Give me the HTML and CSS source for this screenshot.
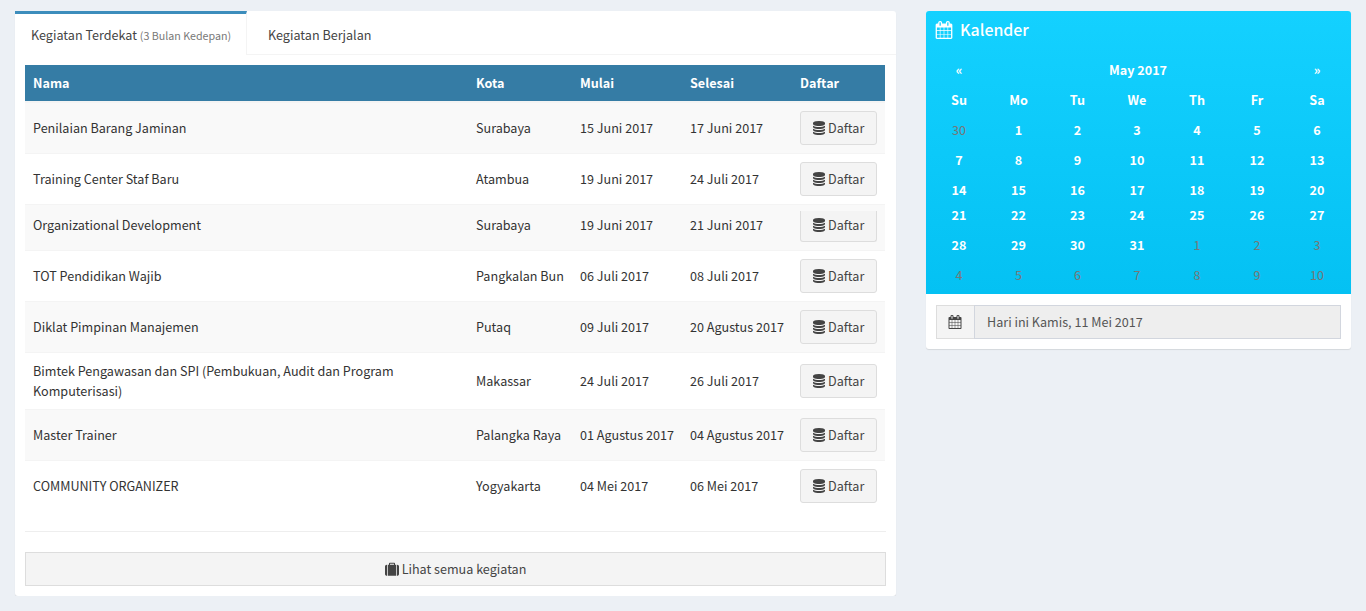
FILE: index.html
```html
<!DOCTYPE html>
<html lang="id">
<head>
<meta charset="utf-8">
<title>Kegiatan</title>
<link rel="stylesheet" href="styles.css">
</head>
<body>
<svg class="sprite" aria-hidden="true">
  <symbol id="calendar" viewBox="0 0 1792 1792"><path d="M192 1664h288v-288h-288v288zM544 1664h320v-288h-320v288zM192 1312h288v-320h-288v320zM544 1312h320v-320h-320v320zM192 928h288v-288h-288v288zM928 1664h320v-288h-320v288zM544 928h320v-288h-320v288zM1312 1664h288v-288h-288v288zM928 1312h320v-320h-320v320zM576 448v-288q0-13-9.5-22.5t-22.5-9.5h-64q-13 0-22.5 9.5t-9.5 22.5v288q0 13 9.5 22.5t22.5 9.5h64q13 0 22.5-9.5t9.5-22.5zM1312 1312h288v-320h-288v320zM928 928h320v-288h-320v288zM1312 928h288v-288h-288v288zM1344 448v-288q0-13-9.5-22.5t-22.5-9.5h-64q-13 0-22.5 9.5t-9.5 22.5v288q0 13 9.5 22.5t22.5 9.5h64q13 0 22.5-9.5t9.5-22.5zM1728 384v1280q0 52-38 90t-90 38h-1408q-52 0-90-38t-38-90v-1280q0-52 38-90t90-38h128v-96q0-66 47-113t113-47h64q66 0 113 47t47 113v96h384v-96q0-66 47-113t113-47h64q66 0 113 47t47 113v96h128q52 0 90 38t38 90z"/></symbol>
  <symbol id="database" viewBox="0 0 1792 1792"><path d="M896 768q237 0 443-43t325-127v170q0 69-103 128t-280 93.5-385 34.5-385-34.5-280-93.5-103-128v-170q119 84 325 127t443 43zM896 1536q237 0 443-43t325-127v170q0 69-103 128t-280 93.5-385 34.5-385-34.5-280-93.5-103-128v-170q119 84 325 127t443 43zM896 1152q237 0 443-43t325-127v170q0 69-103 128t-280 93.5-385 34.5-385-34.5-280-93.5-103-128v-170q119 84 325 127t443 43zM896 0q208 0 385 34.5t280 93.5 103 128v128q0 69-103 128t-280 93.5-385 34.5-385-34.5-280-93.5-103-128v-128q0-69 103-128t280-93.5 385-34.5z"/></symbol>
  <symbol id="suitcase" viewBox="0 -100 1792 1792"><path d="M640 256h512v-128h-512v128zM288 256v1408h-64q-92 0-158-66t-66-158v-960q0-92 66-158t158-66h64zM1408 256v1408h-1024v-1408h128v-160q0-40 28-68t68-28h576q40 0 68 28t28 68v160h128zM1792 480v960q0 92-66 158t-158 66h-64v-1408h64q92 0 158 66t66 158z"/></symbol>
</svg>
<main class="page">
  <section class="card events">
    <nav class="tabs">
      <a class="tab active">Kegiatan Terdekat <small>(3 Bulan Kedepan)</small></a>
      <a class="tab">Kegiatan Berjalan</a>
    </nav>
    <div class="events-body">
      <table class="table">
        <colgroup><col class="c-name"><col class="c-city"><col class="c-date"><col class="c-date"><col class="c-act"></colgroup>
        <thead><tr><th>Nama</th><th>Kota</th><th>Mulai</th><th>Selesai</th><th>Daftar</th></tr></thead>
        <tbody>
          <tr class="first"><td>Penilaian Barang Jaminan</td><td>Surabaya</td><td>15 Juni 2017</td><td>17 Juni 2017</td><td><a class="btn"><svg class="icon"><use href="#database"/></svg><span>Daftar</span></a></td></tr>
          <tr><td>Training Center Staf Baru</td><td>Atambua</td><td>19 Juni 2017</td><td>24 Juli 2017</td><td><a class="btn"><svg class="icon"><use href="#database"/></svg><span>Daftar</span></a></td></tr>
          <tr class="short"><td>Organizational Development</td><td>Surabaya</td><td>19 Juni 2017</td><td>21 Juni 2017</td><td><a class="btn btn-open"><svg class="icon"><use href="#database"/></svg><span>Daftar</span></a></td></tr>
          <tr><td>TOT Pendidikan Wajib</td><td>Pangkalan Bun</td><td>06 Juli 2017</td><td>08 Juli 2017</td><td><a class="btn"><svg class="icon"><use href="#database"/></svg><span>Daftar</span></a></td></tr>
          <tr><td>Diklat Pimpinan Manajemen</td><td>Putaq</td><td>09 Juli 2017</td><td>20 Agustus 2017</td><td><a class="btn"><svg class="icon"><use href="#database"/></svg><span>Daftar</span></a></td></tr>
          <tr><td>Bimtek Pengawasan dan SPI (Pembukuan, Audit dan Program Komputerisasi)</td><td>Makassar</td><td>24 Juli 2017</td><td>26 Juli 2017</td><td><a class="btn"><svg class="icon"><use href="#database"/></svg><span>Daftar</span></a></td></tr>
          <tr><td>Master Trainer</td><td>Palangka Raya</td><td>01 Agustus 2017</td><td>04 Agustus 2017</td><td><a class="btn"><svg class="icon"><use href="#database"/></svg><span>Daftar</span></a></td></tr>
          <tr><td>COMMUNITY ORGANIZER</td><td>Yogyakarta</td><td>04 Mei 2017</td><td>06 Mei 2017</td><td><a class="btn"><svg class="icon"><use href="#database"/></svg><span>Daftar</span></a></td></tr>
        </tbody>
      </table>
      <hr class="rule">
      <a class="btn btn-block"><svg class="icon"><use href="#suitcase"/></svg><span>Lihat semua kegiatan</span></a>
    </div>
  </section>
  <aside class="card calendar">
    <div class="cal-top">
      <h3 class="cal-title"><svg class="icon icon-lg"><use href="#calendar"/></svg><span>Kalender</span></h3>
      <div class="cal-grid">
        <b>«</b><b class="month">May 2017</b><b>»</b>
        <b>Su</b><b>Mo</b><b>Tu</b><b>We</b><b>Th</b><b>Fr</b><b>Sa</b>
        <i>30</i><b>1</b><b>2</b><b>3</b><b>4</b><b>5</b><b>6</b>
        <b>7</b><b>8</b><b>9</b><b>10</b><b>11</b><b>12</b><b>13</b>
        <b>14</b><b>15</b><b>16</b><b>17</b><b>18</b><b>19</b><b>20</b>
        <b>21</b><b>22</b><b>23</b><b>24</b><b>25</b><b>26</b><b>27</b>
        <b>28</b><b>29</b><b>30</b><b>31</b><i>1</i><i>2</i><i>3</i>
        <i>4</i><i>5</i><i>6</i><i>7</i><i>8</i><i>9</i><i>10</i>
      </div>
    </div>
    <div class="today">
      <span class="addon"><svg class="icon"><use href="#calendar"/></svg></span>
      <span class="field">Hari ini Kamis, 11 Mei 2017</span>
    </div>
  </aside>
</main>
</body>
</html>
```
FILE: styles.css
```css
* { box-sizing: border-box; }
body {
  margin: 0;
  background: #ecf0f5;
  color: #333;
  font: 12.6px/20px "Noto Sans CJK SC", "Open Sans", sans-serif;
}
.sprite { display: none; }
.page {
  display: flex;
  align-items: flex-start;
  gap: 30px;
  padding: 11px 15px 0;
}
.card {
  background: #fff;
  border-radius: 3px;
  box-shadow: 0 1px 1px rgba(0, 0, 0, .1);
}
.events { width: 881px; height: 585px; }
.icon { width: 14px; height: 14px; fill: currentColor; flex: none; }

.tabs {
  display: flex;
  height: 44px;
  border-bottom: 1px solid #f4f4f4;
}
.tab {
  height: 43px;
  padding: 14px 16px 0 21px;
  color: #444;
  white-space: nowrap;
}
.tab.active {
  width: 232px;
  height: 44px;
  padding: 11px 0 0 16px;
  background: #fff;
  border-top: 3px solid #3c8dbc;
  border-right: 1px solid #f4f4f4;
}
.tab small { font-size: 10.7px; color: #777; }

.events-body { padding: 10px 10px 0; }
.table {
  width: 860px;
  table-layout: fixed;
  border-collapse: separate;
  border-spacing: 0;
}
.c-name { width: 443px; }
.c-city { width: 104px; }
.c-date { width: 110px; }
.c-act { width: 93px; }
.table th {
  height: 36px;
  padding: 0 8px;
  background: #357ca5;
  color: #fff;
  text-align: left;
}
.table td {
  height: 51px;
  padding: 8px;
  border-top: 1px solid #f4f4f4;
  vertical-align: middle;
}
.table td:not(:first-child) { white-space: nowrap; }
.table tbody tr:nth-child(odd) { background: #f9f9f9; }
.table .first td { height: 52px; border-top-width: 2px; }
.table .short td { height: 46px; padding-top: 3px; }
.table .short td:last-child { padding-top: 6px; }

.btn {
  display: flex;
  align-items: center;
  gap: 2px;
  width: 77px;
  height: 34px;
  padding-left: 11px;
  border: 1px solid #ddd;
  border-radius: 3px;
  background: #f4f4f4;
  color: #444;
}
.btn-open {
  height: 31px;
  padding-bottom: 2px;
  border-top: 0;
  border-radius: 0 0 3px 3px;
}
.btn-block {
  width: 861px;
  gap: 3px;
  justify-content: center;
  padding: 0;
  border-radius: 0;
}
.rule {
  margin: 20px 0;
  border: 0;
  border-top: 1px solid #eee;
}

.calendar { width: 425px; height: 338px; }
.cal-top {
  height: 283px;
  border-radius: 3px 3px 0 0;
  background: linear-gradient(#14d1ff, #04c1f3);
  color: #fff;
}
.cal-title {
  display: flex;
  align-items: center;
  gap: 7px;
  height: 44px;
  margin: 0;
  padding: 0 9px 7px;
  font-size: 15.9px;
  font-weight: 500;
}
.icon-lg { width: 18px; height: 18px; }
.cal-grid {
  display: grid;
  grid-template-columns: 60px 59px 59px repeat(4, 60px);
  grid-template-rows: repeat(4, 30px) 25px repeat(3, 30px);
  padding-left: 3px;
  line-height: 30px;
  text-align: center;
}
.cal-grid i { font-style: normal; color: #777; }
.month { grid-column: span 5; }

.today { display: flex; height: 55px; padding: 11px 10px 10px; }
.addon {
  display: flex;
  align-items: center;
  justify-content: center;
  width: 38px;
  padding-right: 1px;
  border: 1px solid #ddd;
  border-right: 0;
  background: #f4f4f4;
  color: #444;
}
.field {
  flex: 1;
  padding: 6px 12px;
  border: 1px solid #d2d6de;
  background: #eee;
  color: #555;
}
```
